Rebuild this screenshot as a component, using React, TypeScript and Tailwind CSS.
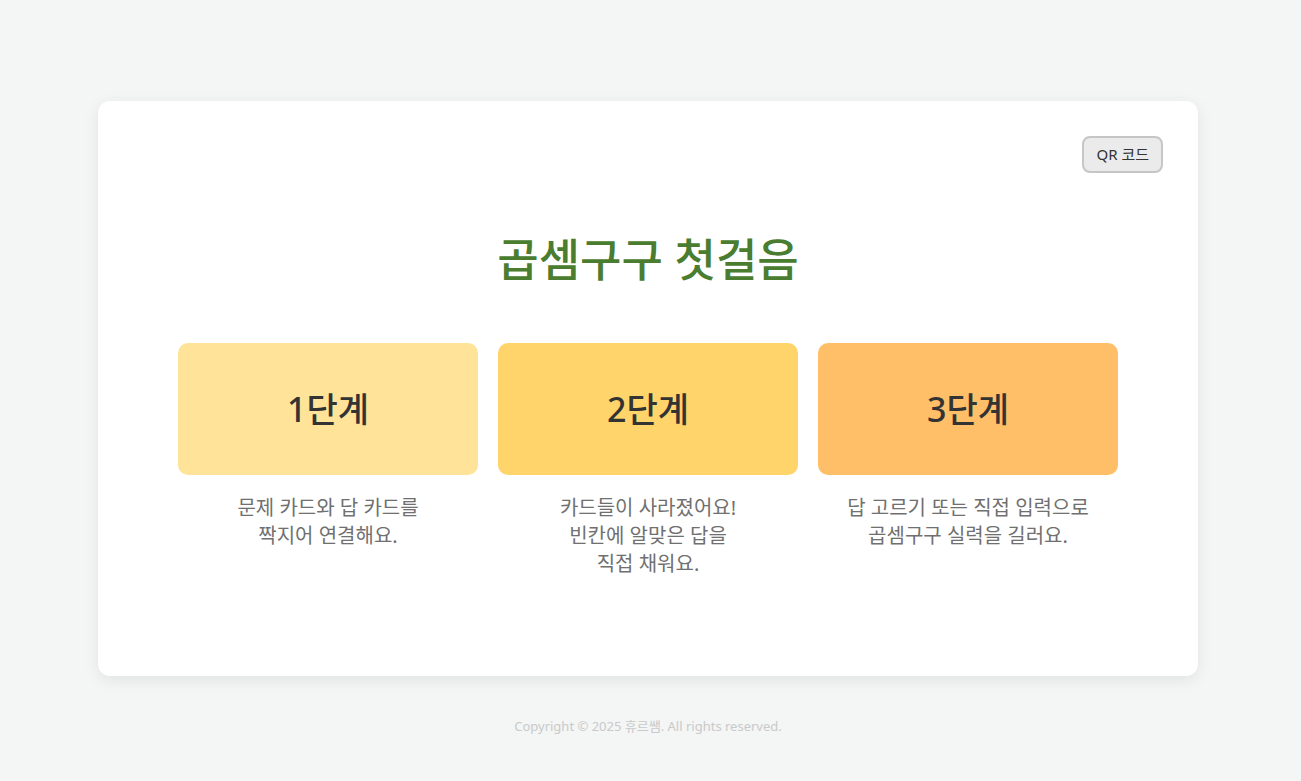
const stages = [
  {
    label: '1단계',
    bg: 'bg-[#ffe398]',
    lines: ['문제 카드와 답 카드를', '짝지어 연결해요.'],
  },
  {
    label: '2단계',
    bg: 'bg-[#ffd46a]',
    lines: ['카드들이 사라졌어요!', '빈칸에 알맞은 답을', '직접 채워요.'],
  },
  {
    label: '3단계',
    bg: 'bg-[#ffbf69]',
    lines: ['답 고르기 또는 직접 입력으로', '곱셈구구 실력을 길러요.'],
  },
];

const App = () => {
  return (
    <div
      className="min-h-screen bg-[#f4f5f5] flex flex-col items-center pt-[101px] pr-[5px]"
      style={{ fontFamily: '"Noto Sans", "Noto Sans CJK KR", sans-serif' }}
    >
      <div className="w-[1100px] bg-white rounded-xl shadow-[0_4px_16px_rgba(0,0,0,0.08)] px-[35px] pt-[35px] pb-[98px]">
        <div className="flex justify-end">
          <button className="h-[37px] px-[12px] rounded-lg border-2 border-[#c6c6c6] bg-[#ebebeb] text-[15px] text-[#333]">
            QR 코드
          </button>
        </div>

        <div className="px-[45px]">
          <h1 className="mt-[64px] mb-[61px] text-center text-[45px] leading-none font-medium text-[#4a7d30]">
            곱셈구구 첫걸음
          </h1>

          {/* 단계 카드 */}
          <div className="grid grid-cols-3 gap-5">
            {stages.map((s) => (
              <div key={s.label} className="flex flex-col items-center">
                <div
                  className={`w-full h-[132px] rounded-[10px] ${s.bg} flex items-center justify-center text-[34px] font-medium text-[#333]`}
                >
                  {s.label}
                </div>
                <p className="mt-[19px] text-center text-[20px] leading-[28px] text-[#707070]">
                  {s.lines.map((l) => (
                    <span key={l} className="block">
                      {l}
                    </span>
                  ))}
                </p>
              </div>
            ))}
          </div>
        </div>
      </div>

      <footer className="mt-[40px] text-[13px] leading-[20px] text-[#c8caca]">
        Copyright © 2025 휴르쌤. All rights reserved.
      </footer>
    </div>
  );
};

export default App;
